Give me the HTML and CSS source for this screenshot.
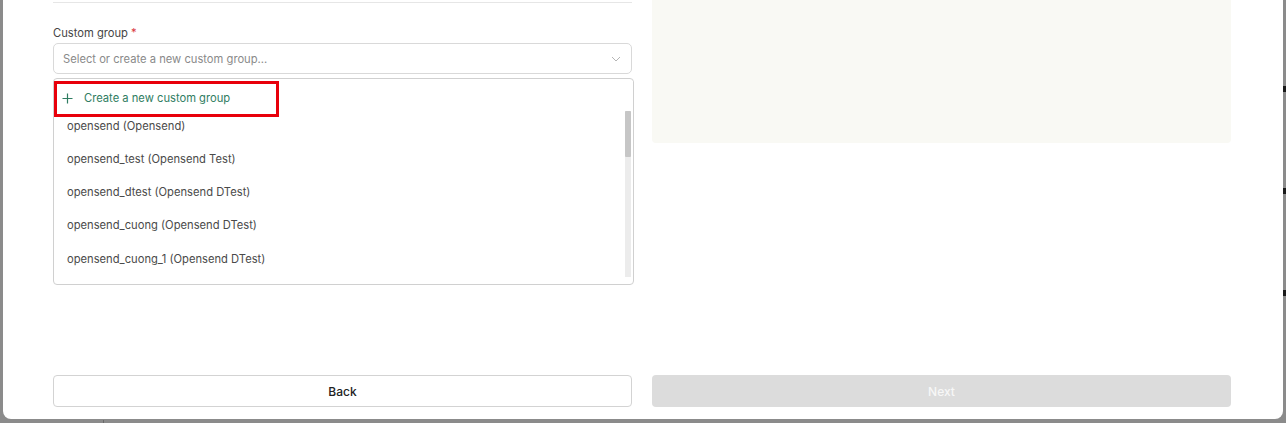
FILE: index.html
```html
<!DOCTYPE html>
<html lang="en">
<head>
    <meta charset="UTF-8">
    <meta name="viewport" content="width=device-width, initial-scale=1.0">
    <title>Custom group</title>
    <link rel="stylesheet" href="styles.css">
</head>
<body>
    <div class="modal">
        <div class="content">
            <!-- Left: form -->
            <div class="form-col">
                <div class="divider"></div>

                <label class="field-label">Custom group <span class="req">*</span></label>
                <div class="select">
                    <span class="placeholder">Select or create a new custom group...</span>
                    <svg class="chevron" width="10" height="6" viewBox="0 0 10 6">
                        <polyline points="1 1, 5 5, 9 1" fill="none" stroke="#b5b5b5" stroke-width="1" />
                    </svg>
                </div>

                <div class="dropdown">
                    <div class="create-item">
                        <svg class="plus" width="11" height="11" viewBox="0 0 11 11">
                            <line x1="5.5" y1="0.5" x2="5.5" y2="10.5" stroke="#2f7d62" stroke-width="1.2" />
                            <line x1="0.5" y1="5.5" x2="10.5" y2="5.5" stroke="#2f7d62" stroke-width="1.2" />
                        </svg>
                        <span>Create a new custom group</span>
                    </div>
                    <div class="options">
                        <div class="option first">opensend (Opensend)</div>
                        <div class="option">opensend_test (Opensend Test)</div>
                        <div class="option">opensend_dtest (Opensend DTest)</div>
                        <div class="option">opensend_cuong (Opensend DTest)</div>
                        <div class="option">opensend_cuong_1 (Opensend DTest)</div>
                    </div>
                    <!-- annotation + scrollbar drawn over the list -->
                    <div class="highlight"></div>
                    <div class="scroll-track"><div class="scroll-thumb"></div></div>
                </div>
            </div>

            <!-- Right: preview -->
            <div class="preview-col">
                <div class="preview"></div>
            </div>
        </div>

        <div class="footer">
            <button class="btn btn-back">Back</button>
            <button class="btn btn-next" disabled>Next</button>
        </div>
    </div>

    <!-- bits of the page behind the overlay -->
    <div class="edge-mark m1"></div>
    <div class="edge-mark m2"></div>
    <div class="edge-mark m3"></div>
    <div class="bottom-tick"></div>
</body>
</html>
```

FILE: styles.css
```css
body {
    margin: 0;
    background-color: #8b8b8b;
    font-family: Inter, "Noto Sans", sans-serif;
    font-size: 11.2px;
    color: #444;
    height: 423px;
    overflow: hidden;
}
.modal {
    margin-left: 3px;
    width: 1280px;
    height: 419px;
    background-color: white;
    border-radius: 0 0 8px 8px;
    display: flex;
    flex-direction: column;
    box-sizing: border-box;
    padding: 0 52px 12px 50px;
}
.content {
    display: grid;
    grid-template-columns: 579px 579px;
    column-gap: 20px;
}
.divider {
    margin-top: 2px;
    height: 1px;
    background-color: #e6e6e6;
}
.field-label {
    display: block;
    margin-top: 22px;
    line-height: 16px;
    color: #454545;
}
.req {
    color: #d9363e;
}
.select {
    margin-top: 2px;
    height: 31px;
    box-sizing: border-box;
    border: 1px solid #d9d9d9;
    border-radius: 5px;
    display: flex;
    align-items: center;
    justify-content: space-between;
    padding: 0 10px 0 9px;
}
.placeholder {
    color: #8a8a8a;
}
.dropdown {
    position: relative;
    margin-top: 4px;
    width: 581px;
    height: 207px;
    box-sizing: border-box;
    border: 1px solid #d0d0d0;
    border-radius: 4px;
    overflow: hidden;
}
.create-item {
    position: relative;
    z-index: 1;
    background-color: white;
    margin-top: 2px;
    height: 34px;
    display: flex;
    align-items: center;
    padding-left: 8px;
    color: #2f7d62;
}
.plus {
    margin-right: 11px;
}
.options {
    margin-top: -6px;
}
.option {
    height: 33.25px;
    display: flex;
    align-items: center;
    padding-left: 13px;
    color: #4a4a4a;
}
.highlight {
    position: absolute;
    z-index: 2;
    left: 0;
    top: 2px;
    width: 225px;
    height: 36px;
    box-sizing: border-box;
    border: 3px solid #e8000b;
}
.scroll-track {
    position: absolute;
    z-index: 2;
    right: 2px;
    top: 32px;
    width: 6px;
    height: 166px;
    background-color: #ececec;
}
.scroll-thumb {
    height: 46px;
    background-color: #c6c6c6;
    border-radius: 1px;
}
.preview {
    height: 143px;
    background-color: #f9f9f4;
    border-radius: 0 0 4px 4px;
}
.footer {
    margin-top: auto;
    display: grid;
    grid-template-columns: 579px 579px;
    column-gap: 20px;
}
.btn {
    height: 32px;
    border-radius: 4px;
    font-family: Inter, "Noto Sans", sans-serif;
    font-size: 12px;
    font-weight: 500;
}
.btn-back {
    background-color: white;
    border: 1px solid #d3d3d3;
    color: #222;
}
.btn-next {
    background-color: #dcdcdc;
    border: none;
    color: #f7f7f7;
}
.edge-mark {
    position: absolute;
    left: 1283px;
    width: 3px;
    height: 6px;
    background-color: #1a1a1a;
}
.m1 { top: 86px; }
.m2 { top: 188px; }
.m3 { top: 290px; }
.bottom-tick {
    position: absolute;
    left: 103px;
    top: 420px;
    width: 1px;
    height: 3px;
    background-color: #6a6a6a;
}
```
